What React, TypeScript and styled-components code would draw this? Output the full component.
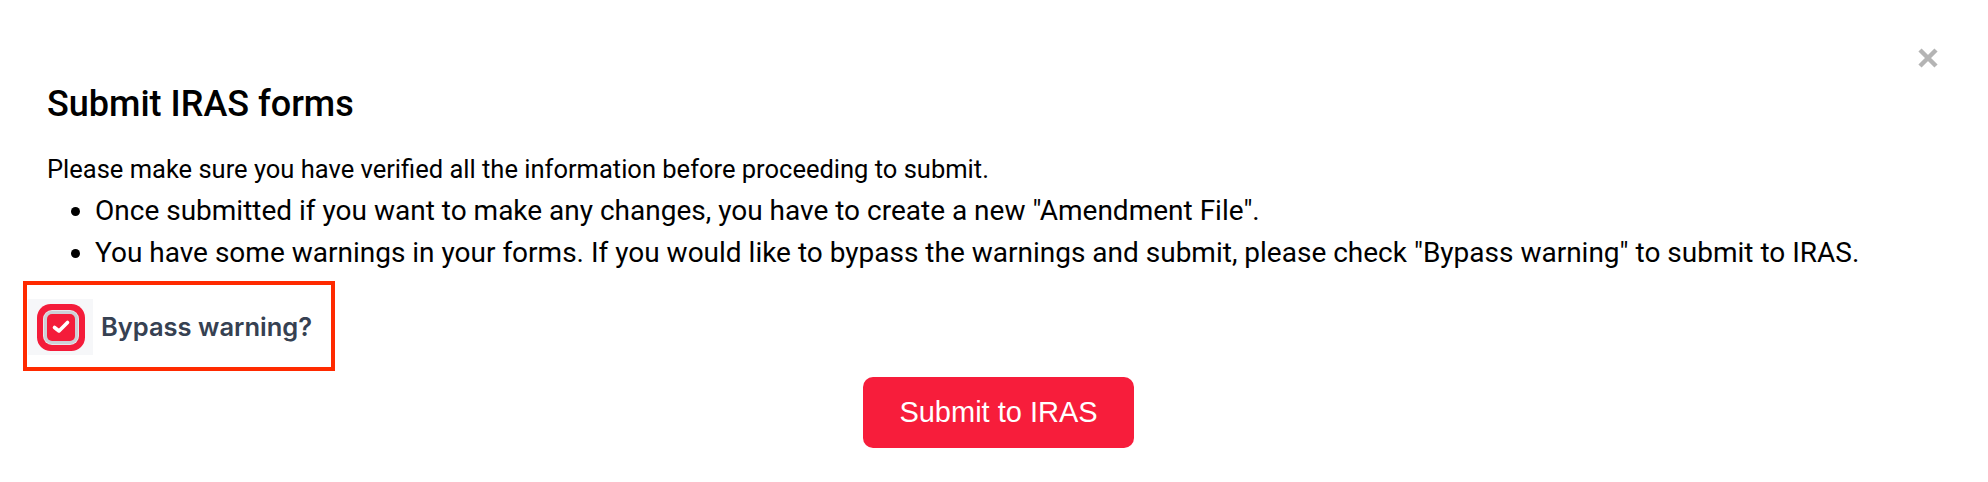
import { useState } from 'react';
import styled, { createGlobalStyle } from 'styled-components';

const GlobalStyle = createGlobalStyle`
  html, body {
    margin: 0;
    padding: 0;
    background: #ffffff;
  }
  body {
    font-family: Roboto, "Liberation Sans", Arial, sans-serif;
    color: #000000;
  }
`;

const Dialog = styled.div`
  position: relative;
  box-sizing: border-box;
  width: 1988px;
  min-height: 482px;
  padding: 84px 38px 0 47px;
  display: flex;
  flex-direction: column;
`;

const CloseButton = styled.button`
  position: absolute;
  top: 47px;
  right: 49px;
  width: 22px;
  height: 22px;
  padding: 0;
  border: 0;
  background: transparent;
  display: flex;
  align-items: center;
  justify-content: center;
  cursor: pointer;
`;

const Title = styled.h2`
  margin: 0;
  font-size: 36px;
  line-height: 40px;
  font-weight: 500;
  color: #000000;
`;

const Body = styled.div`
  margin-top: 24px;
  line-height: 42px;
  font-weight: 400;
  color: #000000;
`;

const Lead = styled.p`
  margin: 0;
  font-size: 25.5px;
`;

const Bullets = styled.ul`
  margin: 0;
  padding-left: 48px;
  font-size: 28px;
`;

const Annotated = styled.div`
  align-self: flex-start;
  margin-left: -24px;
  margin-top: 7px;
  box-sizing: border-box;
  border: 4px solid #ff2a00;
  padding: 14px 19px 12px 1px;
  display: flex;
  align-items: center;
  gap: 8px;
`;

const HitArea = styled.label`
  width: 65px;
  height: 56px;
  background: #f6f7f9;
  display: flex;
  align-items: center;
  justify-content: center;
  cursor: pointer;
`;

const Box = styled.span<{ checked: boolean }>`
  width: 28px;
  height: 27px;
  border-radius: 5px;
  background: ${({ checked }) => (checked ? '#f41c3a' : '#ffffff')};
  box-shadow: 0 0 0 3px #cdd0d6, 0 0 0 4px #e7e9ec, 0 0 0 10px #f41c3a;
  display: flex;
  align-items: center;
  justify-content: center;
`;

const HiddenInput = styled.input`
  position: absolute;
  opacity: 0;
  width: 0;
  height: 0;
`;

const Label = styled.span`
  font-family: Inter, Roboto, sans-serif;
  font-size: 25.5px;
  font-weight: 600;
  color: #364152;
  line-height: 56px;
`;

const Footer = styled.div`
  display: flex;
  justify-content: center;
  margin-top: 6px;
`;

const SubmitButton = styled.button`
  height: 71px;
  padding: 0 36px;
  border: 0;
  border-radius: 10px;
  background: #f71d3b;
  color: #ffffff;
  font-family: "Liberation Sans", Arial, sans-serif;
  font-size: 29px;
  font-weight: 400;
  cursor: pointer;
`;

export default function App() {
  const [bypass, setBypass] = useState(true);

  return (
    <>
      <GlobalStyle />
      <Dialog>
        <CloseButton aria-label="Close">
          <svg width="20" height="20" viewBox="0 0 20 20">
            <path d="M2 2 L18 18 M18 2 L2 18" stroke="#b4b4b4" strokeWidth="4.5" />
          </svg>
        </CloseButton>
        <Title>Submit IRAS forms</Title>
        <Body>
          <Lead>Please make sure you have verified all the information before proceeding to submit.</Lead>
          <Bullets>
            <li>Once submitted if you want to make any changes, you have to create a new "Amendment File".</li>
            <li>
              You have some warnings in your forms. If you would like to bypass the warnings and submit, please
              check "Bypass warning" to submit to IRAS.
            </li>
          </Bullets>
        </Body>
        <Annotated>
          <HitArea>
            <HiddenInput type="checkbox" checked={bypass} onChange={() => setBypass(!bypass)} />
            <Box checked={bypass}>
              {bypass && (
                <svg width="24" height="24" viewBox="0 0 24 24">
                  <path
                    d="M5.5 12.5 L10 16 L18.5 7.5"
                    fill="none"
                    stroke="#ffffff"
                    strokeWidth="3.6"
                    strokeLinecap="round"
                    strokeLinejoin="round"
                  />
                </svg>
              )}
            </Box>
          </HitArea>
          <Label>Bypass warning?</Label>
        </Annotated>
        <Footer>
          <SubmitButton>Submit to IRAS</SubmitButton>
        </Footer>
      </Dialog>
    </>
  );
}
